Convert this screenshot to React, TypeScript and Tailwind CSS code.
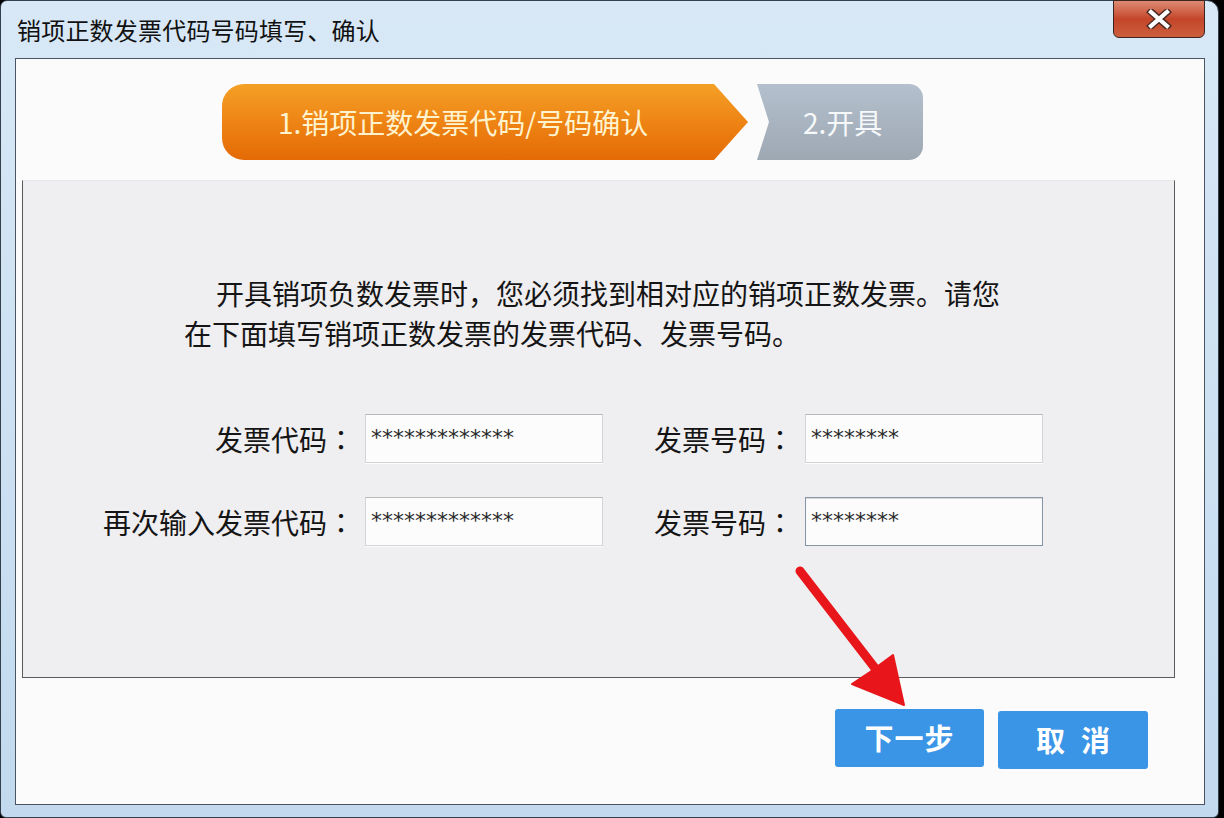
import React from "react";

const cjk = "font-['Noto_Sans_CJK_SC','Noto_Sans',sans-serif]";

function Colon() {
  // centred full-width colon, like the original dialog font
  return <span className="inline-block w-[28px] text-center font-['Noto_Sans_CJK_JP',sans-serif]">：</span>;
}

function Field({ value, focused }: { value: string; focused?: boolean }) {
  return (
    <div
      className={
        "w-[238px] h-[49px] bg-[#fcfcfd] border pl-[5px] pt-[12px] " +
        (focused
          ? "border-[#8796a6] shadow-[inset_0_1px_1px_rgba(0,0,0,0.15)]"
          : "border-[#d3d3d5] border-t-[#b9b9bb] shadow-[0_1px_0_rgba(255,255,255,0.8)]")
      }
    >
      <div className="font-['DejaVu_Sans',sans-serif] text-[22px] leading-[22px] text-[#2a2a2a]">{value}</div>
    </div>
  );
}

export default function App() {
  return (
    <div className={`relative w-[1224px] h-[818px] overflow-hidden bg-black ${cjk}`}>
      {/* window frame */}
      <div className="relative w-[1219px] h-[818px] rounded-tl-[7px] rounded-tr-[12px] rounded-b-[6px] border border-[#34404c] bg-linear-to-b from-[#d8e8f6] via-[#cde1f2] to-[#c2d9ee] flex flex-col px-[14px]">
        {/* title bar */}
        <div className="h-[57px] flex items-center pl-[2px] text-[24px] text-[#111] tracking-[0.2px]">
          销项正数发票代码号码填写、确认
        </div>

        {/* close button */}
        <div className="absolute top-[-1px] right-[13px] w-[92px] h-[38px] rounded-b-[6px] border border-[#3a2520] bg-linear-to-b from-[#dc8a73] via-[#c4452a] to-[#cb5e3d] flex items-center justify-center">
          <svg width="26" height="20" viewBox="0 0 26 20">
            <path d="M5 3 L21 17 M21 3 L5 17" stroke="#4a2a22" strokeWidth="7" strokeLinecap="square" />
            <path d="M5 3 L21 17 M21 3 L5 17" stroke="#ffffff" strokeWidth="4.2" strokeLinecap="square" />
          </svg>
        </div>

        {/* client panel */}
        <div className="w-[1190px] h-[747px] border border-[#4b5561] bg-[#fbfbfc] flex flex-col">
          {/* steps */}
          <div className="mt-[25px] ml-[206px] flex h-[76px]">
            <div className="w-[526px] h-full rounded-l-[22px] bg-linear-to-b from-[#f4a026] via-[#ee8414] to-[#e46a06] [clip-path:polygon(0_0,calc(100%_-_34px)_0,100%_50%,calc(100%_-_34px)_100%,0_100%)] flex items-center pl-[56px] text-[28px] text-[#fff3cf]">
              1.销项正数发票代码/号码确认
            </div>
            <div className="ml-[9px] w-[166px] h-full rounded-r-[14px] bg-linear-to-b from-[#b4c0cd] to-[#9da8b3] [clip-path:polygon(0_0,100%_0,100%_100%,0_100%,12px_50%)] flex items-center pl-[46px] text-[28px] text-[#f6f8fa]">
              2.开具
            </div>
          </div>

          {/* content area */}
          <div className="mt-[20px] ml-[6px] w-[1153px] h-[498px] bg-[#efeef0] border-l border-r border-b border-[#5a5a5a] border-t border-t-[#e6e6e8] text-[#151515]">
            <div className="pt-[92px] pl-[161px] text-[28px] leading-[40px]">
              <div className="pl-[32px]">开具销项负数发票时，您必须找到相对应的销项正数发票。请您</div>
              <div>在下面填写销项正数发票的发票代码、发票号码。</div>
            </div>

            <div className="mt-[61px] flex items-center text-[28px]">
              <div className="w-[332px] text-right">发票代码<Colon /></div>
              <div className="ml-[10px]"><Field value="*************" /></div>
              <div className="w-[191px] text-right">发票号码<Colon /></div>
              <div className="ml-[11px]"><Field value="********" /></div>
            </div>
            <div className="mt-[34px] flex items-center text-[28px]">
              <div className="w-[332px] text-right">再次输入发票代码<Colon /></div>
              <div className="ml-[10px]"><Field value="*************" /></div>
              <div className="w-[191px] text-right">发票号码<Colon /></div>
              <div className="ml-[11px]"><Field value="********" focused /></div>
            </div>
          </div>

          {/* buttons */}
          <div className="mt-[31px] flex justify-end items-start gap-[14px] pr-[56px]">
            <button className="w-[149px] h-[58px] rounded-[3px] bg-[#3a95e6] text-white text-[29px] font-bold tracking-[1px] flex items-center justify-center">
              下一步
            </button>
            <button className="mt-[2px] w-[150px] h-[58px] rounded-[3px] bg-[#3a95e6] text-white text-[29px] font-bold flex items-center justify-center gap-[16px]">
              <span>取</span>
              <span>消</span>
            </button>
          </div>
        </div>
      </div>

      {/* red annotation arrow */}
      <svg className="absolute left-[790px] top-[560px]" width="125" height="155" viewBox="0 0 125 155">
        <path d="M10 11 L88 112" stroke="#e8161b" strokeWidth="9" strokeLinecap="round" />
        <path d="M114 145 L62 124 L80 112 L103 95 Z" fill="#e8161b" stroke="#e8161b" strokeWidth="2" strokeLinejoin="round" />
      </svg>
    </div>
  );
}
